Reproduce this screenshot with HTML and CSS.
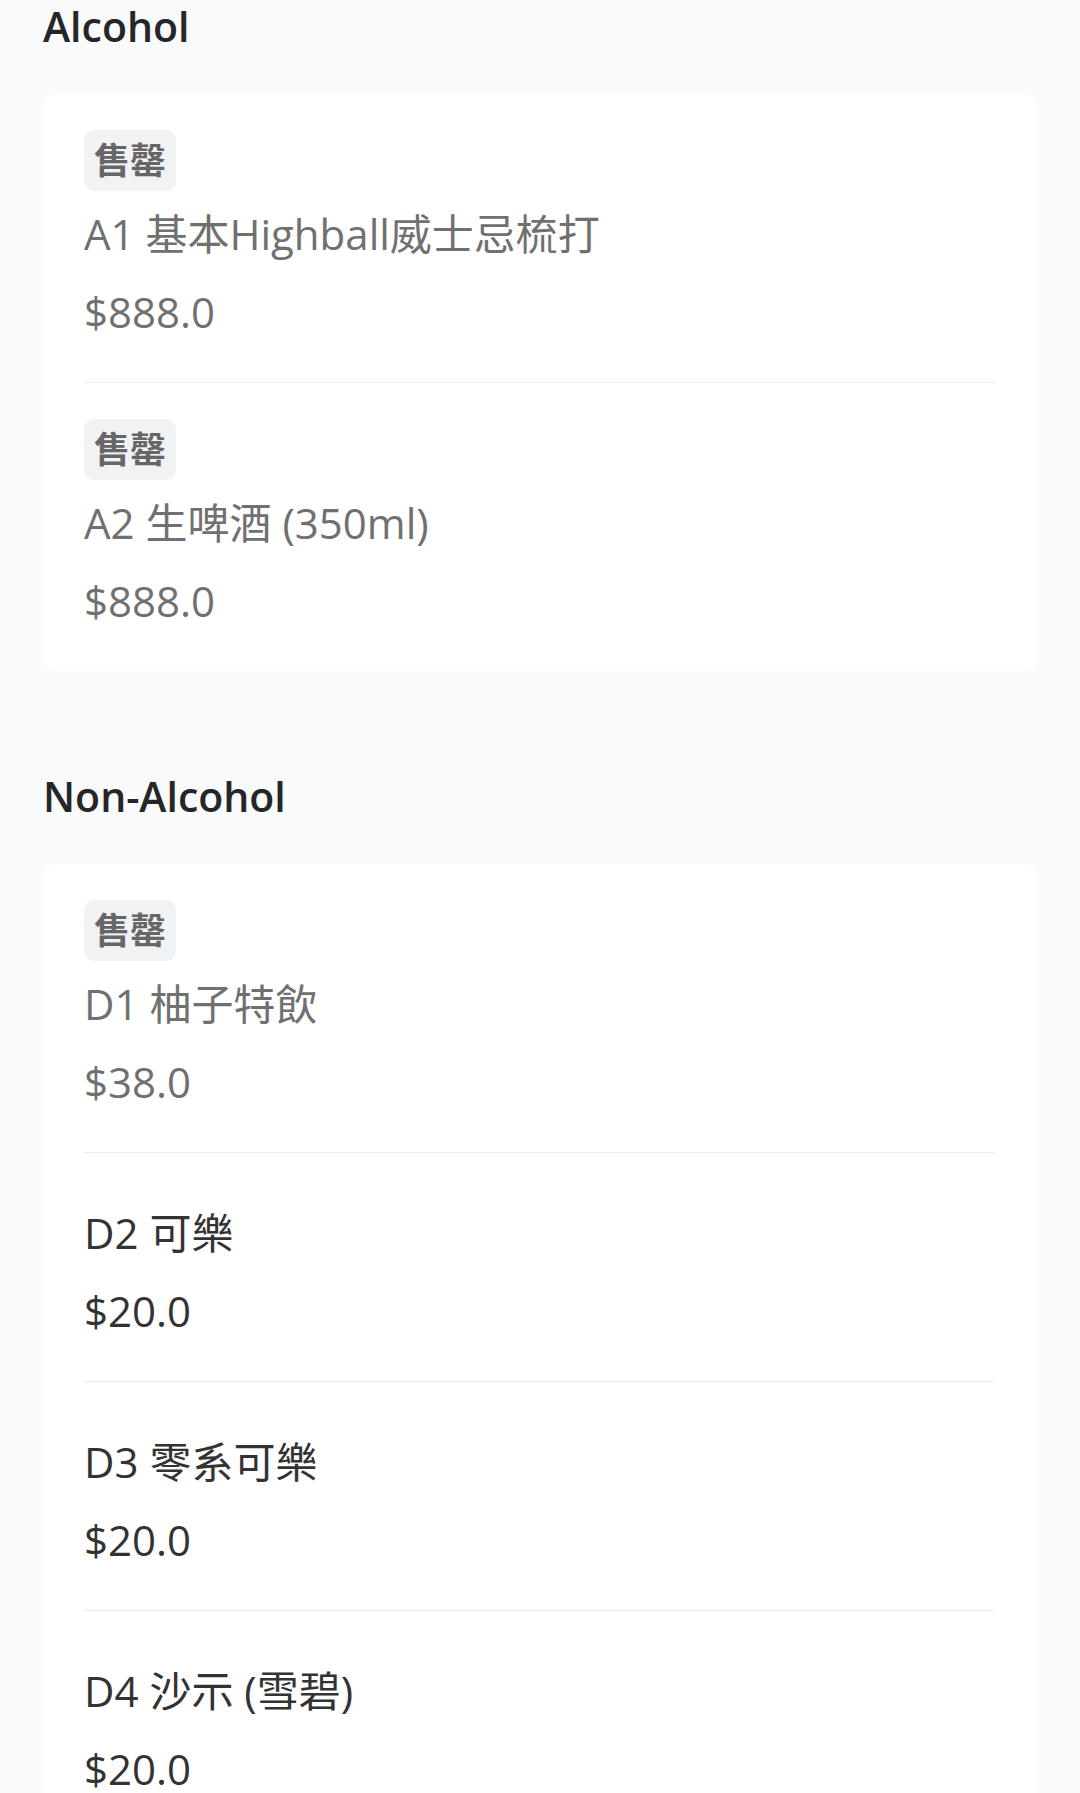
FILE: index.html
```html
<!DOCTYPE html>
<html lang="zh-Hant">
  <head>
    <meta charset="UTF-8" />
    <title>Menu</title>
    <link rel="stylesheet" href="styles.css">
  </head>
  <body>
    <div class="menu">
      <section class="category">
        <h2 class="category-title">Alcohol</h2>
        <div class="card">
          <div class="item soldout">
            <span class="tag">售罄</span>
            <div class="name">A1 基本Highball威士忌梳打</div>
            <div class="price">$888.0</div>
          </div>
          <div class="item soldout">
            <span class="tag">售罄</span>
            <div class="name">A2 生啤酒 (350ml)</div>
            <div class="price">$888.0</div>
          </div>
        </div>
      </section>

      <section class="category">
        <h2 class="category-title">Non-Alcohol</h2>
        <div class="card">
          <div class="item soldout">
            <span class="tag">售罄</span>
            <div class="name">D1 柚子特飲</div>
            <div class="price">$38.0</div>
          </div>
          <div class="item">
            <div class="name">D2 可樂</div>
            <div class="price">$20.0</div>
          </div>
          <div class="item">
            <div class="name">D3 零系可樂</div>
            <div class="price">$20.0</div>
          </div>
          <div class="item">
            <div class="name">D4 沙示 (雪碧)</div>
            <div class="price">$20.0</div>
          </div>
        </div>
      </section>
    </div>
  </body>
</html>
```

FILE: styles.css
```css
/* General styles */
* {
  box-sizing: border-box;
}

body {
  margin: 0;
  padding: 0;
  background-color: #f9fafc;
  font-family: "Open Sans", "Noto Sans CJK TC", sans-serif;
  color: #333333;
}

.menu {
  padding: 0 43px;
}

.category {
  margin-bottom: 99px;
}

.category-title {
  margin: 0 0 42px;
  font-size: 41px;
  line-height: 52px;
  font-weight: 600;
  color: #262626;
}

.card {
  background-color: #ffffff;
  border-radius: 12px;
  padding: 0 42px 0 41px;
}

/* one menu row */
.item {
  display: flex;
  flex-direction: column;
  align-items: flex-start;
  padding: 36px 0 31px;
}

.item + .item {
  border-top: 1px solid #ececec;
}

.tag {
  display: inline-block;
  font-size: 36px;
  line-height: 49px;
  font-weight: 700;
  padding: 6px 10px;
  border-radius: 10px;
  background-color: #f1f2f4;
  color: #666666;
}

.name,
.price {
  font-size: 42px;
  line-height: 78px;
}

.name {
  margin-top: 5px;
}

.tag + .name {
  margin-top: 4px;
}

.soldout .name,
.soldout .price {
  color: #707070;
}
```
